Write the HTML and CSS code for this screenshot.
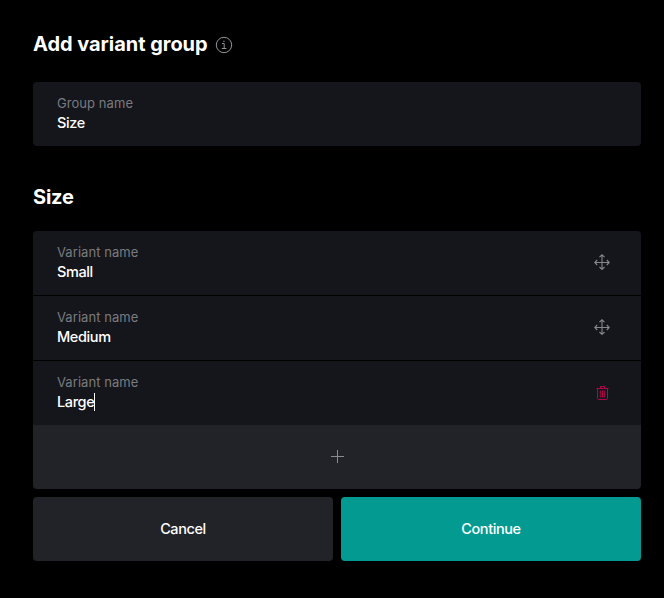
FILE: index.html
```html
<!DOCTYPE html>
<html lang="en">
<head>
<meta charset="utf-8">
<title>Add variant group</title>
<link rel="stylesheet" href="styles.css">
</head>
<body>
<main class="dialog">
  <header class="header">
    <h1 class="title heading">Add variant group</h1>
    <svg class="info" width="18" height="18" viewBox="0 0 18 18" fill="none" stroke="currentColor"><circle cx="9" cy="9" r="7.7"/><path d="M7 7.5H9.2V12.5M6.8 12.5H11.4M8.2 5.3H9.7"/></svg>
  </header>
  <label class="field group"><span class="text"><span class="caption">Group name</span><span class="value">Size</span></span></label>
  <h2 class="title subtitle">Size</h2>
  <section class="variants">
    <div class="field">
      <div class="text"><span class="caption">Variant name</span><span class="value">Small</span></div>
      <svg class="move" width="16" height="16" viewBox="0 0 16 16" fill="none" stroke="currentColor"><path d="M8 1V15M1 8.5H15M5.5 3.2L8 .8L10.5 3.2M5.5 13L8 15.4L10.5 13M3.2 6L.8 8.5L3.2 11M12.8 6L15.2 8.5L12.8 11"/></svg>
    </div>
    <div class="field">
      <div class="text"><span class="caption">Variant name</span><span class="value">Medium</span></div>
      <svg class="move" width="16" height="16" viewBox="0 0 16 16" fill="none" stroke="currentColor"><path d="M8 1V15M1 8.5H15M5.5 3.2L8 .8L10.5 3.2M5.5 13L8 15.4L10.5 13M3.2 6L.8 8.5L3.2 11M12.8 6L15.2 8.5L12.8 11"/></svg>
    </div>
    <div class="field">
      <div class="text"><span class="caption">Variant name</span><span class="value">Large<i class="caret"></i></span></div>
      <svg class="trash" width="14" height="16" viewBox="0 0 14 16" fill="none" stroke="currentColor"><path d="M.5 3.5H12.5M4.5 3.5V1.5H8.5V3.5M1.5 3.5V13.5Q1.5 14.5 2.5 14.5H10.5Q11.5 14.5 11.5 13.5V3.5M4.3 5.5V12.5M6.5 5.5V12.5M8.7 5.5V12.5"/></svg>
    </div>
    <button class="add" aria-label="Add variant"><svg width="13" height="13" viewBox="0 0 13 13" stroke="currentColor"><path d="M6.5 0V13M0 6.5H13"/></svg></button>
  </section>
  <footer class="actions">
    <button class="button">Cancel</button>
    <button class="button primary">Continue</button>
  </footer>
</main>
</body>
</html>
```
FILE: styles.css
```css
* { box-sizing: border-box; }
body { margin: 0; background: #000; color: #fff; font-family: Inter, "Liberation Sans", sans-serif; }
.dialog { width: 608px; margin-left: 33px; padding-top: 32px; }
.header { display: flex; align-items: center; height: 24px; margin-bottom: 26px; }
.title { margin: 0; font-size: 20px; line-height: 24px; font-weight: 700; letter-spacing: -0.2px; }
.heading { letter-spacing: -0.04px; }
.info { margin: 1px 0 0 7px; color: #909298; }
.subtitle { margin: 39px 0 22px; }
.field { display: flex; align-items: center; justify-content: space-between; height: 64px; padding: 0 31px 0 24px; background: #15161b; }
.group { border-radius: 4px; }
.text { display: flex; flex-direction: column; padding-bottom: 1px; }
.caption { font-size: 13px; line-height: 19px; letter-spacing: 0.06px; color: #797b80; }
.value { height: 20px; font-size: 14.5px; line-height: 20px; font-weight: 500; letter-spacing: -0.38px; white-space: nowrap; }
.caret { display: inline-block; width: 1px; height: 18px; background: #fff; vertical-align: -4px; margin: -2px 0; position: relative; top: -2px; }
.variants { display: flex; flex-direction: column; gap: 1px; border-radius: 4px; overflow: hidden; }
.move { color: #85878c; stroke-width: 1.1; margin-bottom: 2px; }
.trash { color: #b0074c; margin-bottom: 1px; }
.add { display: flex; align-items: center; justify-content: center; height: 64px; margin-top: -1px; padding: 0 0 2px; border: 0; background: #222328; color: #8b8c90; }
.actions { display: grid; grid-template-columns: 1fr 1fr; gap: 8px; margin-top: 8px; }
.button { height: 64px; padding: 0 0 2px; border: 0; border-radius: 4px; background: #222328; color: #fff; font: 500 14.5px Inter, "Liberation Sans", sans-serif; letter-spacing: -0.4px; }
.primary { background: #039a91; }
```
